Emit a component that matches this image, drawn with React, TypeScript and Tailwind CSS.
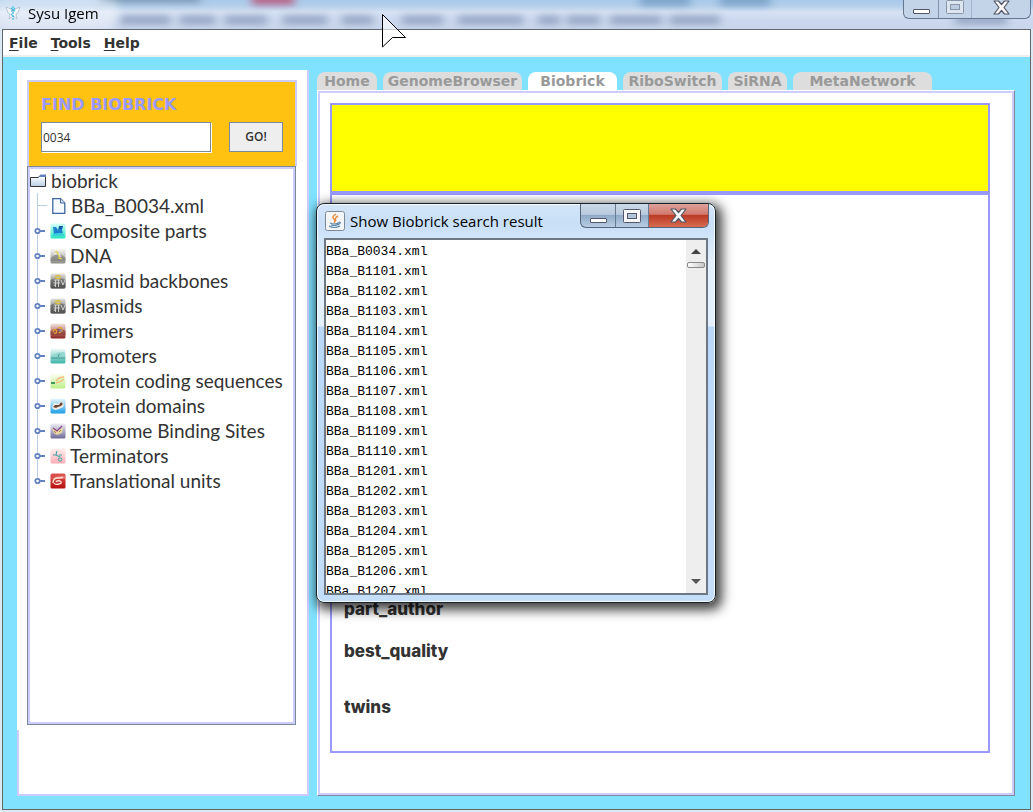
import { useState, type ReactNode } from "react";

const tabs = [
  { label: "Home", width: "w-[60px]" },
  { label: "GenomeBrowser", width: "w-[139px]" },
  { label: "Biobrick", width: "w-[89px]" },
  { label: "RiboSwitch", width: "w-[99px]" },
  { label: "SiRNA", width: "w-[59px]" },
  { label: "MetaNetwork", width: "w-[139px]" },
];

const results = [
  "0034", "1101", "1102", "1103", "1104", "1105", "1106", "1107", "1108",
  "1109", "1110", "1201", "1202", "1203", "1204", "1205", "1206", "1207",
];

// Smudges seen through the glass title bar: [start, width]
const smudges = [
  [120, 50], [180, 35], [225, 42], [283, 44], [342, 31], [402, 41],
  [458, 65], [538, 22], [567, 33], [610, 52], [670, 50], [955, 52],
];

function Tile({ id, from, to, children }: { id: string; from: string; to: string; children: ReactNode }) {
  return (
    <svg viewBox="0 0 16 16" className="size-4 shrink-0" aria-hidden="true">
      <defs>
        <linearGradient id={id} x1="0" y1="0" x2="0" y2="1">
          <stop offset="0" stopColor={from} />
          <stop offset="1" stopColor={to} />
        </linearGradient>
      </defs>
      <rect x="0.5" y="0.5" width="15" height="15" rx="1.5" fill={`url(#${id})`} />
      {children}
    </svg>
  );
}

function PlasmidIcon({ id }: { id: string }) {
  return (
    <Tile id={id} from="#e4e4e0" to="#484848">
      <path d="M0.500 7 Q8 3 15.500 7 V14 Q15 15.500 14 15.500 H2 Q0.500 15.500 0.500 14Z" fill="#555553" opacity=".55" />
      <path d="M5 4 Q8 1 11 4 M5.500 5.500 H10.500" stroke="#dcbf35" strokeWidth="1.300" fill="none" />
      <path d="M4 7 H10 M5.500 7 V14 M8.500 7 V14 M3.500 10 H10 M4 13 L5.500 11 M11 7 L13 12 L15 7" stroke="#d8d8d8" strokeWidth=".9" fill="none" />
    </Tile>
  );
}

const categories: { label: string; icon: ReactNode }[] = [
  {
    label: "Composite parts",
    icon: (
      <Tile id="composite" from="#d6fff8" to="#22e6c0">
        <path d="M3 4 L6 4 L8 7 L9 3 L13 3 L12 7 L13 10 L4 11Z" fill="#1f7fd0" />
        <path d="M9 3 L13 3 L11.500 6.500 L9 6Z" fill="#1458a8" />
        <path d="M3 11 Q8 9 14 11 V13 H3Z" fill="#31c8dd" opacity=".7" />
      </Tile>
    ),
  },
  {
    label: "DNA",
    icon: (
      <Tile id="dna" from="#fbfbf8" to="#8b8c86">
        <path d="M0.500 11 Q4 6 8 7 Q12 6 15.500 10 V13 H0.500Z" fill="#77786f" opacity=".6" />
        <path d="M5 4 Q8 3 8 6 Q10 7 9 10 L12 11" stroke="#e6d450" strokeWidth="1.300" fill="none" />
        <path d="M4 6 H6 M9 6 L11 9" stroke="#fff" strokeWidth=".8" fill="none" />
      </Tile>
    ),
  },
  { label: "Plasmid backbones", icon: <PlasmidIcon id="backbone" /> },
  { label: "Plasmids", icon: <PlasmidIcon id="plasmid" /> },
  {
    label: "Primers",
    icon: (
      <Tile id="primer" from="#f3e6e2" to="#8a221d">
        <path d="M0.500 8 Q8 3 15.500 8 V12 H0.500Z" fill="#8b4038" opacity=".7" />
        <path d="M3 9 Q4 5 6 7 Q8 11 4 10 M8 5 Q12 3 12 8 L9 10" stroke="#e5a532" strokeWidth="1.300" fill="none" />
        <circle cx="10.500" cy="7.500" r="1.300" fill="#7a86b0" />
      </Tile>
    ),
  },
  {
    label: "Promoters",
    icon: (
      <Tile id="promoter" from="#f3fbfa" to="#3cb5a8">
        <path d="M1 9 Q4 4 14 4 Q15 6 15 9Z" fill="#8ed4cd" opacity=".8" />
        <path d="M8 9 L9.500 6 M1 10 H15" stroke="#3c8f8a" strokeWidth=".9" fill="none" />
      </Tile>
    ),
  },
  {
    label: "Protein coding sequences",
    icon: (
      <Tile id="coding" from="#fdfff6" to="#bdf08a">
        <path d="M1 10 H5" stroke="#28884b" strokeWidth="1.700" />
        <path d="M6 8 Q9 4 14 4 M6 10 Q11 9 14 6" stroke="#f0bc78" strokeWidth="1.500" fill="none" />
      </Tile>
    ),
  },
  {
    label: "Protein domains",
    icon: (
      <Tile id="domain" from="#eaf8ff" to="#1a9ee6">
        <path d="M2 10 L4 5 L8 6 L11 3 L14 6 L13 9 L9 11 L5 12Z" fill="#f3ede6" />
        <path d="M3 9 L5 7 L9 7 L11 4 L13 6 L11 8 L8 9 L6 10Z" fill="#6b4634" />
      </Tile>
    ),
  },
  {
    label: "Ribosome Binding Sites",
    icon: (
      <Tile id="ribosome" from="#f0eff4" to="#706a9a">
        <path d="M2 5 L7 7 L13 5 L12 10 L7 12 L4 10Z" fill="#e6d8a0" />
        <path d="M3 5 L7 8 L12 3" stroke="#8c3e87" strokeWidth="1.100" fill="none" />
        <path d="M4 8 L6 10 M9 9 L11 7" stroke="#b07c3f" strokeWidth=".9" fill="none" />
      </Tile>
    ),
  },
  {
    label: "Terminators",
    icon: (
      <Tile id="terminator" from="#fff0ef" to="#ffacb4">
        <path d="M3 7 H6 L7 3 M6 7 L10 9 M9 7 H12" stroke="#41a8a2" strokeWidth="1.100" fill="none" />
        <circle cx="10" cy="11.500" r="1.700" fill="none" stroke="#41a8a2" strokeWidth="1" />
      </Tile>
    ),
  },
  {
    label: "Translational units",
    icon: (
      <Tile id="translational" from="#e05652" to="#b5100f">
        <path d="M0.500 6 Q7 2 15.500 3 V6Z" fill="#f09890" opacity=".5" />
        <path d="M3 10 Q3 5 8 5 Q12 5 13 4 M6 9 Q7 7 10 8 Q13 10 9 11 Q5 12 4 10" stroke="#ffe3d6" strokeWidth="1.400" fill="none" />
      </Tile>
    ),
  },
];

function Handle() {
  return (
    <svg viewBox="0 0 12 8" className="h-2 w-3 shrink-0" aria-hidden="true">
      <path d="M6 4 H11" stroke="#6382bf" strokeWidth="2" />
      <circle cx="3.500" cy="4" r="2.200" fill="#fff" stroke="#6382bf" strokeWidth="1.800" />
    </svg>
  );
}

function FolderIcon() {
  return (
    <svg viewBox="0 0 16 14" className="h-[14px] w-4 shrink-0" aria-hidden="true">
      <defs>
        <linearGradient id="folder" x1="0" y1="0" x2="0" y2="1">
          <stop offset="0" stopColor="#fff" />
          <stop offset="1" stopColor="#b8cfe5" />
        </linearGradient>
      </defs>
      <path d="M0.500 3.500 H8 L10 2 H15.500 V12.500 H0.500Z" fill="url(#folder)" stroke="#333" />
      <path d="M9 2.500 L10.500 0.500 H16 V3 H9Z" fill="#6382bf" />
    </svg>
  );
}

function FileIcon() {
  return (
    <svg viewBox="0 0 14 16" className="h-4 w-[14px] shrink-0" aria-hidden="true">
      <path d="M0.800 0.700 H8.500 L12.800 5 V15.300 H0.800Z" fill="#f6fbff" stroke="#3b679d" strokeWidth="1.300" />
      <path d="M8.500 0.700 V5 H12.800" fill="#d6e6f5" stroke="#3b679d" strokeWidth="1" />
    </svg>
  );
}

function CloseGlyph() {
  return (
    <svg viewBox="0 0 17 15" className="h-[15px] w-[17px]" aria-hidden="true">
      <path d="M1 1 H5.500 L8.500 4.500 L11.500 1 H16 L11 7.500 L16 14 H11.500 L8.500 10.500 L5.500 14 H1 L6 7.500Z" fill="#f7f7f7" stroke="#535666" strokeWidth="1.200" strokeLinejoin="round" />
    </svg>
  );
}

function MinimizeGlyph() {
  return (
    <svg viewBox="0 0 17 5" className="h-[5px] w-[17px]" aria-hidden="true">
      <rect x="0.500" y="0.500" width="16" height="4" rx="0.500" fill="#fff" stroke="#535666" />
    </svg>
  );
}

function MaximizeGlyph() {
  return (
    <svg viewBox="0 0 18 14" className="h-[14px] w-[18px]" aria-hidden="true">
      <rect x="0.500" y="0.500" width="17" height="13" rx="1" fill="#f8f8f8" stroke="#535666" />
      <rect x="4.500" y="4.500" width="9" height="5" fill="#b3c5da" stroke="#535666" />
    </svg>
  );
}

function GlassBackdrop() {
  return (
    <svg className="absolute inset-0 h-full w-full" aria-hidden="true">
      <defs>
        <filter id="glass" x="-20%" y="-60%" width="140%" height="220%">
          <feGaussianBlur stdDeviation="4 3" />
        </filter>
      </defs>
      <g filter="url(#glass)">
        <rect x="252" y="-6" width="42" height="11" fill="#b8688c" />
        <rect x="640" y="-6" width="50" height="12" fill="#7fa6cb" />
        <rect x="720" y="-6" width="50" height="12" fill="#7fa6cb" />
        <rect x="100" y="-8" width="100" height="11" fill="#7f9bb5" />
        {smudges.map(([x, width]) => (
          <rect key={x} x={x} y="15" width={width} height="10" fill="#8494b4" opacity=".65" />
        ))}
      </g>
    </svg>
  );
}

function TitleBar() {
  return (
    <header className="relative flex h-[29px] items-start justify-between overflow-hidden bg-[linear-gradient(180deg,#a9c9ea_0px,#b5cfeb_6px,#d6e2f4_12px,#cbd8ef_20px,#c9d6ec_29px)]">
      <GlassBackdrop />
      <div className="relative flex items-center gap-[7px] rounded-full bg-white/40 pt-px pr-3 pl-[5px] shadow-[0_0_10px_8px_rgba(255,255,255,0.4)]">
        <svg viewBox="0 0 16 18" className="h-[18px] w-4" aria-hidden="true">
          <path d="M1 3 L6 5 L8 9 L10 5 L15 3 L13 9 L11 10 L12 15 L8 12 L4 15 L5 10 L3 9Z" fill="#f2f5f8" stroke="#a8b6c6" strokeWidth=".7" />
          <path d="M8 2 V16 M6 4 L10 7 M10 4 L6 8 M6 10 L9 13" stroke="#42bddf" strokeWidth="1.200" strokeDasharray="2 1" />
        </svg>
        <h1 className="font-['Open_Sans',sans-serif] text-[15px] leading-6 text-black">Sysu Igem</h1>
      </div>
      <div className="relative mr-[2px] flex h-[19px] overflow-hidden rounded-b-md border border-t-0 border-[#65778f] bg-[#c3d4e9]">
        <button aria-label="Minimize" className="flex w-[35px] items-end justify-center border-r border-[#8295ad] pb-1"><MinimizeGlyph /></button>
        <button aria-label="Maximize" disabled className="flex w-[33px] items-start justify-center border-r border-[#8295ad] opacity-50"><MaximizeGlyph /></button>
        <button aria-label="Close" className="flex w-[58px] items-start justify-center"><CloseGlyph /></button>
      </div>
    </header>
  );
}

function MenuBar() {
  return (
    <nav className="flex h-[27px] shrink-0 items-center gap-[13px] border-b-2 border-[#eeeeee] bg-white pl-[6px] font-['DejaVu_Sans',sans-serif] text-sm font-bold text-[#333333]">
      {["File", "Tools", "Help"].map((name) => (
        <button key={name}><span className="underline underline-offset-2">{name[0]}</span>{name.slice(1)}</button>
      ))}
    </nav>
  );
}

function Sidebar() {
  const [query, setQuery] = useState("0034");
  return (
    <aside className="flex w-[292px] shrink-0 flex-col border-r-2 border-b-2 border-[#ccccff] bg-white">
      <div className="mt-[10px] ml-[10px] w-[270px]">
        <form onSubmit={(e) => e.preventDefault()} className="h-[86px] border-2 border-b-0 border-[#ccccff] bg-[#ffc211] px-3 pt-[13px]">
          <label htmlFor="find" className="block font-['DejaVu_Sans',sans-serif] text-base leading-5 font-bold text-[#9999ff]">FIND BIOBRICK</label>
          <div className="mt-[7px] flex gap-[18px]">
            <input id="find" value={query} onChange={(e) => setQuery(e.target.value)} className="h-[30px] w-[170px] border border-[#7a8a99] bg-white px-px font-['Open_Sans',sans-serif] text-xs text-[#333333] shadow-[1px_1px_0_white]" />
            <button className="h-[30px] w-[54px] border border-[#7a8a99] bg-[#eeeeee] font-['Open_Sans',sans-serif] text-xs font-semibold text-[#333333]">GO!</button>
          </div>
        </form>
      </div>
      <div className="ml-[10px] w-[269px] border border-[#7a8a99]">
        <div className="h-[557px] border-2 border-[#ccccff] font-['Lato',sans-serif] text-[19px] leading-6 text-[#333333]">
          <div className="flex h-6 items-center gap-[5px]"><FolderIcon />biobrick</div>
          <ul className="ml-[7px]">
            <li className="flex h-[25px] items-center border-l border-[#b8cfe5]">
              <span className="mr-[5px] h-px w-[9px] bg-[#b8cfe5]" />
              <FileIcon /><span className="ml-[5px]">BBa_B0034.xml</span>
            </li>
            {categories.map(({ label, icon }, i) => (
              <li key={label} className="flex h-[25px] items-center">
                <span className={i === categories.length - 1 ? "-mr-px h-[13px] self-start border-l border-[#b8cfe5]" : "-mr-px h-[25px] border-l border-[#b8cfe5]"} />
                <button className="-ml-[3px] mr-1 flex" aria-label={`Expand ${label}`}><Handle /></button>
                {icon}<span className="ml-1 whitespace-nowrap">{label}</span>
              </li>
            ))}
          </ul>
        </div>
      </div>
      <div className="mt-[5px] flex-1 border-l-2 border-[#ccccff]" />
    </aside>
  );
}

function Content() {
  return (
    <main className="flex min-w-0 flex-1 flex-col">
      <div role="tablist" className="mt-[2px] flex h-[18px] gap-[6px]">
        {tabs.map(({ label, width }) => (
          <button key={label} role="tab" aria-selected={label === "Biobrick"} className={`${width} ${label === "Biobrick" ? "bg-white" : "bg-[#dddddd]"} rounded-t-lg text-center font-['DejaVu_Sans',sans-serif] text-sm leading-[18px] font-bold text-[#999999]`}>{label}</button>
        ))}
      </div>
      <div className="flex-1 border-t border-l border-r border-b border-t-white border-l-white border-r-[#8088a0] border-b-[#8088a0]">
        <div className="h-full border-2 border-[#ccccff] bg-white pt-[10px] pr-[22px] pl-[10px]">
          <div className="h-[90px] border-2 border-[#9999ff] bg-[#ffff00]" />
          <section className="flex h-[560px] flex-col justify-end border-2 border-[#9999ff] pb-8 pl-3 font-['Inter',sans-serif] text-[17px] leading-6 font-extrabold text-[#333333]">
            <h2>part_author</h2>
            <h2 className="mt-[18px]">best_quality</h2>
            <h2 className="mt-8">twins</h2>
          </section>
        </div>
      </div>
    </main>
  );
}

function ResultDialog() {
  return (
    <div role="dialog" aria-labelledby="result-title" className="absolute top-[203px] left-[316px] flex h-[400px] w-[400px] flex-col rounded-lg border border-[#15212b] bg-[linear-gradient(180deg,#d3e5f8_0px,#c8dff7_20px,#e4f0fd_60px,#e4f0fd_122px,#b9d8f8_123px,#c4defa_100%)] px-[6px] pb-[7px] shadow-[3px_4px_12px_3px_rgba(0,0,0,0.75),inset_0_0_0_1px_rgba(255,255,255,0.8)]">
      <div className="flex h-[34px] shrink-0 items-start justify-between">
        <div className="flex items-center gap-[5px] pt-[5px] pl-[2px]">
          <svg viewBox="0 0 20 20" className="size-5" aria-hidden="true">
            <rect x="0.500" y="0.500" width="19" height="19" rx="2" fill="#f3f5f7" stroke="#7d8994" />
            <path d="M11 3 Q6 6 9 8 Q11 10 9 12 M13 5 Q9 7 11 10" stroke="#ee8b38" strokeWidth="1.400" fill="none" />
            <path d="M5 12 Q9 14 13 12 L12 14 Q9 15 6 14 M14 11 Q17 11 13 14 M4 15 Q9 18 15 15" stroke="#5b86a8" strokeWidth="1.200" fill="none" />
          </svg>
          <h2 id="result-title" className="font-['Open_Sans',sans-serif] text-[15px] leading-6 whitespace-nowrap text-black">Show Biobrick search result</h2>
        </div>
        <div className="flex h-6 overflow-hidden rounded-b-md border border-t-0 border-[#536579] bg-[linear-gradient(180deg,#cbd9e8_0%,#b8cadd_45%,#91abc7_50%,#b7cde3_100%)]">
          <button aria-label="Minimize result window" className="flex w-[35px] items-end justify-center border-r border-[#667b92] pb-1"><MinimizeGlyph /></button>
          <button aria-label="Maximize result window" className="flex w-[33px] items-center justify-center border-r border-[#667b92]"><MaximizeGlyph /></button>
          <button aria-label="Close result window" className="flex w-[59px] items-center justify-center bg-[linear-gradient(180deg,#dfa29b_0%,#d0796b_45%,#bc3a25_50%,#d66c50_100%)]"><CloseGlyph /></button>
        </div>
      </div>
      <div className="mx-px flex min-h-0 flex-1 border-2 border-[#6e7885] bg-white">
        <ul className="flex-1 overflow-hidden pt-[2px] font-['Liberation_Mono',monospace] text-[13px] leading-5 text-black">
          {results.map((id) => <li key={id}>BBa_B{id}.xml</li>)}
        </ul>
        <div className="flex w-[20px] flex-col items-center bg-[#eeeeee] pt-[9px] pb-[9px]">
          <svg viewBox="0 0 10 5" className="h-[5px] w-[10px]" aria-hidden="true"><path d="M0 5 L5 0 L10 5Z" fill="#444" /></svg>
          <div className="mt-2 h-[6px] w-[18px] rounded-xs border border-[#888888] bg-linear-to-r from-white to-[#c8c8c8]" />
          <svg viewBox="0 0 10 5" className="mt-auto h-[5px] w-[10px]" aria-hidden="true"><path d="M0 0 L10 0 L5 5Z" fill="#555" /></svg>
        </div>
      </div>
    </div>
  );
}

export default function App() {
  return (
    <div className="relative flex min-h-screen flex-col overflow-hidden bg-[#dce9f5]">
      <TitleBar />
      <div className="mr-[2px] mb-[2px] ml-[2px] flex flex-1 flex-col border border-[#60686c] bg-[#80e2ff]">
        <MenuBar />
        <div className="flex flex-1 gap-2 pt-[13px] pr-[15px] pb-[13px] pl-[14px]">
          <Sidebar />
          <Content />
        </div>
      </div>
      <ResultDialog />
      <svg viewBox="0 0 25 34" className="absolute top-[14px] left-[382px] h-[34px] w-[25px]" aria-hidden="true">
        <path d="M0.500 0.500 L23.500 23.500 H10.500 L0.500 33Z" fill="#fff" fillOpacity=".65" stroke="#000" strokeWidth="1" />
      </svg>
    </div>
  );
}
